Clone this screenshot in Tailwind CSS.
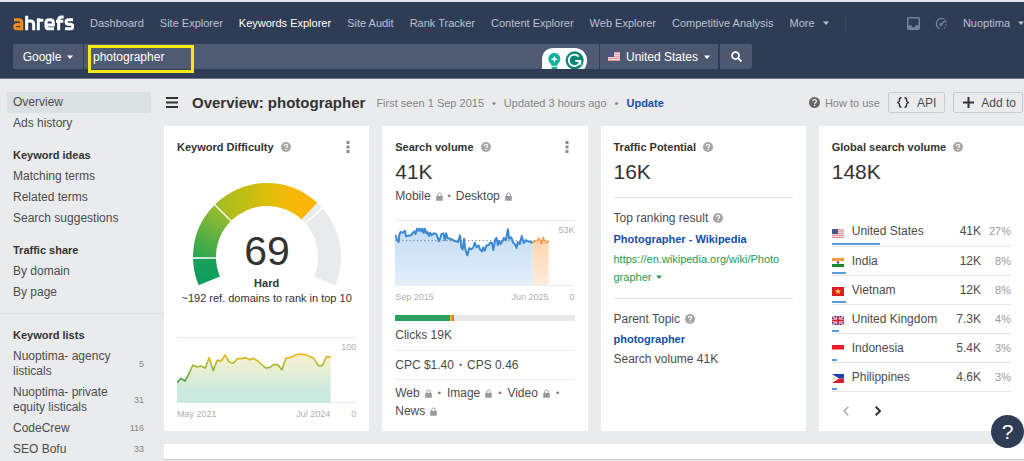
<!DOCTYPE html>
<html lang="en">
<head>
<meta charset="utf-8">
<meta name="viewport" content="width=device-width, initial-scale=1">
<title>Keywords Explorer: photographer</title>
<script src="https://cdn.jsdelivr.net/npm/@tailwindcss/browser@4"></script>
</head>
<body class="relative min-h-screen overflow-x-hidden bg-[#e9ebed] font-['Liberation_Sans',Arial,sans-serif] text-[12px] leading-4 text-[#4c4c4c]">
<svg class="hidden" aria-hidden="true">
  <symbol id="help" viewBox="0 0 20 20"><circle cx="10" cy="10" r="10" fill="currentColor"/><path d="M6.8 7.8c0-4.6 6.6-4 6.6-.3 0 2.500-3.200 2.300-3.200 4.900" fill="none" stroke="#fff" stroke-width="2.200"/><circle cx="10.200" cy="15.200" r="1.400" fill="#fff"/></symbol>
  <symbol id="lock" viewBox="0 0 14 18"><path d="M3.500 9V5.500a3.500 3.500 0 0 1 7 0V9" fill="none" stroke="currentColor" stroke-width="2"/><rect x="0.500" y="8" width="13" height="9.500" rx="1" fill="currentColor"/></symbol>
  <symbol id="caret" viewBox="0 0 12 8"><path d="M0 1h12L6 8z" fill="currentColor"/></symbol>
  <symbol id="dots" viewBox="0 0 4 12"><path d="M.5 0h3v3h-3zM.5 4.500h3v3h-3zM.5 9h3v3h-3z" fill="currentColor"/></symbol>
  <symbol id="us" viewBox="0 0 24 18"><path fill="#f3dfe1" d="M0 0h24v18H0z"/><path d="M0 1.500h24M0 5.500h24M0 9.500h24M0 13.200h24M0 17h24" stroke="#dc8f97" stroke-width="1.900"/><path fill="#4a5788" d="M0 0h12v10H0z"/></symbol>
</svg>

<header class="border-t-2 border-b border-t-[#dfe5ec] border-b-[#6d7686] bg-[#2f3c56] pb-[9px]">
  <nav class="flex h-[42px] items-center pl-[13px] text-[11px] whitespace-nowrap text-[#b9c1cf]" aria-label="Main">
    <a href="#" class="mr-4 block" aria-label="ahrefs">
      <svg class="h-4 w-[61px]" viewBox="0 0 183 48" fill="none" stroke-width="9">
        <g stroke="#f58b1b"><path d="M3 14.500h14c6 0 9 2 9 8V46M26 41.500H12c-9 0-9-13 0-13h14"/></g>
        <g stroke="#fff"><path d="M41 2v44M41 18h11c7 0 10 3 10 9v19M76 46V10M76 16h15M123 41.500h-14c-7 0-10-3-10-8V23c0-6 3-9 9-9h4c6 0 9 3 9 9v7H99M137 46V15c0-6 3-9 9-9h6M129 18.500h22M180 14.500h-14c-9 0-9 13 0 13h6c10 0 10 14 0 14h-16"/></g>
      </svg>
    </a>
    <div class="flex items-center gap-4">
      <a href="#">Dashboard</a>
      <a href="#">Site Explorer</a>
      <a href="#" class="text-white">Keywords Explorer</a>
      <a href="#">Site Audit</a>
      <a href="#">Rank Tracker</a>
      <a href="#">Content Explorer</a>
      <a href="#">Web Explorer</a>
      <a href="#">Competitive Analysis</a>
      <button class="flex items-center gap-2">More <svg class="h-1 w-1.5"><use href="#caret"/></svg></button>
      <span class="h-4 w-px bg-[#3b4761]"></span>
    </div>
    <div class="ml-auto flex items-center gap-[15px]">
      <button aria-label="Inbox" class="text-[#76819a]"><svg class="size-[13px]" viewBox="0 0 26 26" fill="none" stroke="currentColor" stroke-width="3"><rect x="1.500" y="1.500" width="23" height="23" rx="2"/><path d="M2 18h6l2 4h6l2-4h6"/><path d="M2 18h6l2 4h6l2-4h6v6H2z" fill="currentColor" stroke="none"/></svg></button>
      <button aria-label="Usage" class="text-[#76819a]"><svg class="size-[13px]" viewBox="0 0 26 26" fill="none" stroke="currentColor" stroke-width="2.500"><path d="M19 4A11 11 0 1 0 10 24"/><path d="M12 15l10-9"/><circle cx="12" cy="14.500" r="2"/><path d="M22 9a11 11 0 0 1-8 15" stroke-dasharray="2.500 3.500"/></svg></button>
      <button class="flex items-center gap-2">Nuoptima <svg class="h-1 w-1.5"><use href="#caret"/></svg></button>
    </div>
  </nav>
  <form class="flex h-[25px] pl-[13px] text-[12px] text-white">
    <button type="button" class="flex w-[70px] items-center justify-center gap-1.5 rounded-l-xs bg-[#4c5870]">Google <svg class="h-1 w-1.5"><use href="#caret"/></svg></button>
    <div class="relative ml-px flex flex-none basis-[515px] bg-[#4f5b73]">
      <input type="text" value="photographer" aria-label="Keyword" class="w-full bg-transparent pl-[9px] text-white outline-none">
      <span class="absolute top-px left-[4px] h-7 w-[106px] border-3 border-[#f5e916]"></span>
      <svg class="absolute right-3 bottom-0 h-[21px] w-[45px]" viewBox="0 0 135 63">
        <path d="M0 63V36C0 12 14 0 36 0h60c26 0 39 18 39 37 0 10-3 19-8 26z" fill="#fff"/>
        <path d="M19 33a18 18 0 1 1 29 14l-3 6H29l-3-6c-4-3-7-8-7-14zM29 56h16v7H29z" fill="#12b39a"/><path d="M37 23l3 8 8 3-8 3-3 8-3-8-8-3 8-3z" fill="#fff"/>
        <circle cx="98" cy="37" r="27" fill="#0b8573"/><path d="M110 26a17 17 0 1 0 4 13h-14M106 39h9v11" fill="none" stroke="#fff" stroke-width="5.500"/>
      </svg>
    </div>
    <button type="button" class="ml-px flex w-[118px] items-center justify-center gap-1.5 bg-[#4c5870] whitespace-nowrap"><svg class="h-[9px] w-3"><use href="#us"/></svg>United States <svg class="h-1 w-1.5"><use href="#caret"/></svg></button>
    <button type="submit" aria-label="Search" class="ml-0.5 flex w-8 items-center justify-center rounded-r-xs bg-[#4c5870]"><svg class="size-[11px]" viewBox="0 0 22 22" fill="none" stroke="currentColor" stroke-width="3.500"><circle cx="9" cy="9" r="7"/><path d="M14 14l7 7"/></svg></button>
  </form>
</header>

<div class="flex">
  <aside class="w-[164px] flex-none pt-[13px]">
    <nav class="flex flex-col pr-[13px] pl-[7px] leading-[21px]" aria-label="Keyword">
      <a href="#" class="rounded-xs bg-[#dbe0e3] px-1.5">Overview</a>
      <a href="#" class="px-1.5">Ads history</a>
      <h2 class="mt-[11px] px-1.5 text-[11px] font-bold text-[#333]">Keyword ideas</h2>
      <a href="#" class="px-1.5">Matching terms</a>
      <a href="#" class="px-1.5">Related terms</a>
      <a href="#" class="px-1.5">Search suggestions</a>
      <h2 class="mt-[11px] px-1.5 text-[11px] font-bold text-[#333]">Traffic share</h2>
      <a href="#" class="px-1.5">By domain</a>
      <a href="#" class="px-1.5">By page</a>
    </nav>
    <section class="mt-2.5 flex flex-col gap-1.5 border-t border-[#dcdfe2] pt-[13px] pr-5 pl-[13px] leading-[15px]">
      <h2 class="text-[11px] leading-4 font-bold text-[#333]">Keyword lists</h2>
      <a href="#" class="flex items-center justify-between"><span>Nuoptima- agency<br>listicals</span><span class="text-[9px] text-[#858585]">5</span></a>
      <a href="#" class="flex items-center justify-between"><span>Nuoptima- private<br>equity listicals</span><span class="text-[9px] text-[#858585]">31</span></a>
      <a href="#" class="flex items-center justify-between"><span>CodeCrew</span><span class="text-[9px] text-[#858585]">116</span></a>
      <a href="#" class="flex items-center justify-between"><span>SEO Bofu</span><span class="text-[9px] text-[#858585]">33</span></a>
    </section>
  </aside>

  <main class="min-w-0 flex-1 pt-[13px]">
    <div class="flex items-center whitespace-nowrap">
      <button aria-label="Toggle menu" class="ml-0.5 text-[#333]"><svg class="h-[11px] w-3" viewBox="0 0 12 11" stroke="currentColor" stroke-width="2"><path d="M0 1h12M0 5.500h12M0 10h12"/></svg></button>
      <h1 class="ml-3.5 text-[15px] font-bold text-[#333]">Overview: photographer</h1>
      <p class="ml-[11px] flex gap-2 text-[11px] text-[#858585]"><span>First seen 1 Sep 2015</span><span>•</span><span>Updated 3 hours ago</span><span>•</span><a href="#" class="font-bold text-[#1250a8]">Update</a></p>
      <a href="#" class="ml-auto flex items-center gap-[5px] text-[11px] text-[#858585]"><svg class="size-[11px] text-[#666]"><use href="#help"/></svg>How to use</a>
      <button class="ml-2 flex h-[21px] items-center gap-2 rounded-xs border border-[#c9cccf] px-2"><svg class="h-[11px] w-3 text-[#333]" viewBox="0 0 24 22" fill="none" stroke="currentColor" stroke-width="3"><path d="M9 1.500H8C5 1.500 5 3 5 6s0 4-3.500 5C5 12 5 13 5 16s0 4.500 3 4.500h1M15 1.500h1c3 0 3 1.500 3 4.500s0 4 3.500 5c-3.500 1-3.500 2-3.500 5s0 4.500-3 4.500h-1"/></svg>API</button>
      <button class="mr-px ml-2 flex h-[21px] items-center gap-[7px] rounded-xs border border-[#c9cccf] pr-1.5 pl-[9px]"><svg class="size-[11px] text-[#333]" viewBox="0 0 11 11" stroke="currentColor" stroke-width="2"><path d="M5.500 0v11M0 5.500h11"/></svg>Add to</button>
    </div>

    <div class="mt-[13px] grid grid-cols-4 gap-[13px]">
      <section class="flex flex-col bg-white px-[13px] pt-[13px] pb-[11px]">
        <h2 class="flex items-center text-[11px] font-bold text-[#333]">Keyword Difficulty <svg class="ml-[7px] size-[10px] text-[#a5a5a5]"><use href="#help"/></svg><button aria-label="Options" class="mr-1.5 ml-auto text-[#8a8a8a]"><svg class="h-3 w-1"><use href="#dots"/></svg></button></h2>
        <svg class="mx-auto mt-[27px] h-[104px] w-[150px]" viewBox="-75 -75 150 104" role="img" aria-label="Keyword difficulty 69">
          <defs>
            <linearGradient id="g1" x1="0" y1="1" x2="0" y2="0"><stop stop-color="#0b9d5d"/><stop offset="1" stop-color="#1ba05a"/></linearGradient>
            <linearGradient id="g2" x1="0" y1="1" x2=".4" y2="0"><stop stop-color="#27a552"/><stop offset="1" stop-color="#96bb30"/></linearGradient>
            <linearGradient id="g3"><stop stop-color="#9fbc22"/><stop offset=".5" stop-color="#dabf0a"/><stop offset=".75" stop-color="#f7b806"/><stop offset="1" stop-color="#fcb205"/></linearGradient>
          </defs>
          <path d="M-68.400 28.300A74 74 0 0 1-74 0H-51A51 51 0 0 0-47.100 19.500z" fill="url(#g1)"/>
          <path d="M-74 0A74 74 0 0 1-52.300-52.300L-36-36A51 51 0 0 0-51 0z" fill="url(#g2)"/>
          <path d="M-52.300-52.300A74 74 0 0 1 50.300-54.300L34.700-37.400A51 51 0 0 0-36-36z" fill="url(#g3)"/>
          <path d="M50.300-54.300A74 74 0 0 1 68.400 28.300L47.100 19.500A51 51 0 0 0 34.700-37.400z" fill="#e9eaec"/>
          <path d="M-75 1H-50M-53.500-53.500L-35-35M56-49.500L37.500-33" stroke="#fff" stroke-width="1.300"/>
          <text y="8" text-anchor="middle" font-size="41" fill="#333">69</text>
        </svg>
        <p class="mt-[-10px] text-center text-[11px] leading-[15px] font-bold text-[#333]">Hard</p>
        <p class="text-center text-[11px] leading-[15px] whitespace-nowrap text-[#333]">~192 ref. domains to rank in top 10</p>
        <figure class="relative mt-auto text-[9px] leading-3 text-[#b0b0b0]">
          <svg class="block h-[66px] w-full" viewBox="0 0 540 198" preserveAspectRatio="none">
            <defs>
              <linearGradient id="kf" x1="0" y1="0" x2="0" y2="1"><stop stop-color="#f8f0d2"/><stop offset=".35" stop-color="#e5efd5"/><stop offset=".75" stop-color="#cbe9df"/><stop offset="1" stop-color="#c9eadf"/></linearGradient>
              <linearGradient id="ks" gradientUnits="userSpaceOnUse" x1="0" y1="255" x2="0" y2="340"><stop stop-color="#f0bb18"/><stop offset=".2" stop-color="#cfbb22"/><stop offset=".5" stop-color="#93b72f"/><stop offset="1" stop-color="#3ea850"/></linearGradient>
            </defs>
            <path d="M0 1.500H540M0 197H540" stroke="#e6e6e6" stroke-width="3"/>
            <g transform="translate(-53 -203)" stroke-linejoin="round">
              <path fill="url(#kf)" d="M53 340 65 327 77 335 88 315 101 287 113 293 125 290 138 296 150 265 162 303 174 273 187 274 198 257 210 278 222 282 235 268 247 268 260 265 272 271 285 267 300 278 320 296 333 294 345 285 357 286 369 301 381 266 393 265 405 259 420 254 435 255 450 260 465 267 479 289 491 289 503 262 516 263V401H53z"/>
              <path fill="none" stroke="url(#ks)" stroke-width="5" d="M53 340 65 327 77 335 88 315 101 287 113 293 125 290 138 296 150 265 162 303 174 273 187 274 198 257 210 278 222 282 235 268 247 268 260 265 272 271 285 267 300 278 320 296 333 294 345 285 357 286 369 301 381 266 393 265 405 259 420 254 435 255 450 260 465 267 479 289 491 289 503 262 516 263"/>
            </g>
          </svg>
          <span class="absolute top-1 right-0">100</span>
          <figcaption class="mt-[5px] flex"><span>May 2021</span><span class="mr-[26px] ml-auto">Jul 2024</span><span class="absolute right-0">0</span></figcaption>
        </figure>
      </section>

      <section class="flex flex-col bg-white px-[13px] pt-[13px] pb-3">
        <h2 class="flex items-center text-[11px] font-bold text-[#333]">Search volume <svg class="ml-[7px] size-[10px] text-[#a5a5a5]"><use href="#help"/></svg><button aria-label="Options" class="mr-1.5 ml-auto text-[#8a8a8a]"><svg class="h-3 w-1"><use href="#dots"/></svg></button></h2>
        <p class="mt-[5px] text-[21px] leading-6 text-[#333]">41K</p>
        <p class="mt-1 flex items-center gap-[5px]">Mobile <svg class="h-[9px] w-[7px] text-[#999]"><use href="#lock"/></svg><span class="text-[9px] text-[#777]">•</span>Desktop <svg class="h-[9px] w-[7px] text-[#999]"><use href="#lock"/></svg></p>
        <figure class="relative mt-4 text-[9px] leading-3 text-[#b0b0b0]">
          <svg class="block h-[66px] w-full" viewBox="0 0 540 198" preserveAspectRatio="none">
            <defs>
              <linearGradient id="vf" x1="0" y1="0" x2="0" y2="1"><stop stop-color="#c3dcf4"/><stop offset="1" stop-color="#e5effa"/></linearGradient>
              <linearGradient id="of" x1="0" y1="0" x2="0" y2="1"><stop stop-color="#fdd3ab"/><stop offset="1" stop-color="#fdeddd"/></linearGradient>
            </defs>
            <path d="M0 1.500H540M0 197H540" stroke="#e6e6e6" stroke-width="3"/>
            <g transform="translate(-18 -16)" stroke-linejoin="round">
              <path fill="url(#vf)" d="M18 60 24 75 29 82 31 60 35 52 42 54 48 48 51 65 58 63 66 62 70 56 76 50 80 58 84 42 88 48 92 42 96 50 100 42 104 55 108 42 112 56 116 52 120 64 124 54 128 62 134 56 142 58 146 66 150 80 154 72 158 58 164 56 168 76 172 56 176 70 184 72 192 76 200 80 208 82 214 62 218 98 222 104 226 72 230 104 236 122 242 100 248 104 254 98 258 84 264 98 270 92 274 104 280 110 284 98 288 108 294 92 300 92 304 84 310 84 314 106 320 74 324 70 328 92 332 78 336 88 342 80 346 70 352 76 358 44 362 72 368 68 374 84 380 90 384 100 388 82 394 88 400 64 406 86 412 76 418 80 426 82 433 84V212H18z"/>
              <path fill="url(#of)" d="M433 84 438 78 444 82 450 72 456 72 459 90 464 68 470 84 476 82 481 78V212H433z"/>
              <path d="M18 78H481" stroke="#7b8085" stroke-width="3" stroke-dasharray="4 7"/>
              <path fill="none" stroke="#3b89d2" stroke-width="6" d="M18 60 24 75 29 82 31 60 35 52 42 54 48 48 51 65 58 63 66 62 70 56 76 50 80 58 84 42 88 48 92 42 96 50 100 42 104 55 108 42 112 56 116 52 120 64 124 54 128 62 134 56 142 58 146 66 150 80 154 72 158 58 164 56 168 76 172 56 176 70 184 72 192 76 200 80 208 82 214 62 218 98 222 104 226 72 230 104 236 122 242 100 248 104 254 98 258 84 264 98 270 92 274 104 280 110 284 98 288 108 294 92 300 92 304 84 310 84 314 106 320 74 324 70 328 92 332 78 336 88 342 80 346 70 352 76 358 44 362 72 368 68 374 84 380 90 384 100 388 82 394 88 400 64 406 86 412 76 418 80 426 82 433 84"/>
              <path fill="none" stroke="#f39a3f" stroke-width="5" stroke-dasharray="14 4" d="M433 84 438 78 444 82 450 72 456 72 459 90 464 68 470 84 476 82 481 78"/>
            </g>
          </svg>
          <span class="absolute top-1 right-0">53K</span>
          <figcaption class="mt-[5px] flex"><span>Sep 2015</span><span class="mr-[26px] ml-auto">Jun 2025</span><span class="absolute right-0">0</span></figcaption>
        </figure>
        <div class="mt-3 flex h-1.5 bg-[#e9e9e9]"><span class="w-[55px] bg-[#27a35f]"></span><span class="w-0.5 bg-[#e8b92c]"></span><span class="w-0.5 bg-[#e1772f]"></span></div>
        <p class="mt-1.5 border-b border-[#ececec] pb-[7px]">Clicks 19K</p>
        <p class="flex gap-[5px] border-b border-[#ececec] py-1.5">CPC $1.40 <span class="text-[9px] text-[#777]">•</span> CPS 0.46</p>
        <div class="mt-[5px] flex flex-wrap items-center gap-x-1.5 gap-y-[2px]">
          <span class="flex items-center gap-[5px]">Web <svg class="h-[9px] w-[7px] text-[#999]"><use href="#lock"/></svg></span><span class="text-[9px] text-[#777]">•</span>
          <span class="flex items-center gap-[5px]">Image <svg class="h-[9px] w-[7px] text-[#999]"><use href="#lock"/></svg></span><span class="text-[9px] text-[#777]">•</span>
          <span class="flex items-center gap-[5px]">Video <svg class="h-[9px] w-[7px] text-[#999]"><use href="#lock"/></svg></span><span class="text-[9px] text-[#777]">•</span>
          <span class="flex items-center gap-[5px]">News <svg class="h-[9px] w-[7px] text-[#999]"><use href="#lock"/></svg></span>
        </div>
      </section>

      <section class="flex flex-col bg-white px-[13px] pt-[13px] pb-3">
        <h2 class="flex items-center text-[11px] font-bold text-[#333]">Traffic Potential <svg class="ml-[7px] size-[10px] text-[#a5a5a5]"><use href="#help"/></svg></h2>
        <p class="mt-[5px] text-[21px] leading-6 text-[#333]">16K</p>
        <div class="mt-[13px] border-t border-[#e6e6e6] pt-3">
          <p class="flex items-center gap-[5px]">Top ranking result <svg class="size-[10px] text-[#a5a5a5]"><use href="#help"/></svg></p>
          <a href="#" class="mt-[5px] block text-[11px] font-bold text-[#1250a8]">Photographer - Wikipedia</a>
          <a href="#" class="mt-[3px] block text-[11px] leading-[18px] text-[#1d9d50]">https://en.wikipedia.org/wiki/Photo<br><span class="flex items-center gap-[5px]">grapher <svg class="h-1 w-1.5"><use href="#caret"/></svg></span></a>
        </div>
        <div class="mt-3 border-t border-[#e6e6e6] pt-3">
          <p class="flex items-center gap-[5px]">Parent Topic <svg class="size-[10px] text-[#a5a5a5]"><use href="#help"/></svg></p>
          <a href="#" class="mt-1 block text-[11px] font-bold text-[#1250a8]">photographer</a>
          <p class="mt-1">Search volume 41K</p>
        </div>
      </section>

      <section class="flex flex-col bg-white px-[13px] pt-[13px] pb-3">
        <h2 class="flex items-center text-[11px] font-bold whitespace-nowrap text-[#333]">Global search volume <svg class="ml-[7px] size-[10px] text-[#a5a5a5]"><use href="#help"/></svg></h2>
        <p class="mt-[5px] text-[21px] leading-6 text-[#333]">148K</p>
        <table class="mt-[33px] w-full whitespace-nowrap">
          <tbody>
            <tr class="relative h-[29px] border-b border-[#e6e6e6]"><td class="w-5 pt-1"><svg class="h-[9px] w-3"><use href="#us"/></svg><span class="absolute bottom-0 left-0 h-0.5 bg-[#5a9bdc]" style="width:27%"></span></td><td>United States</td><td class="text-right">41K</td><td class="w-[30px] text-right text-[11px] text-[#9a9a9a]">27%</td></tr>
            <tr class="relative h-[29px] border-b border-[#e6e6e6]"><td class="pt-1"><svg class="h-[9px] w-3" viewBox="0 0 24 18"><path fill="#f59a3a" d="M0 0h24v6H0z"/><path fill="#fff" d="M0 6h24v6H0z"/><path fill="#158a2b" d="M0 12h24v6H0z"/><circle cx="12" cy="9" r="2.500" fill="#394f8f"/></svg><span class="absolute bottom-0 left-0 h-0.5 bg-[#5a9bdc]" style="width:8%"></span></td><td>India</td><td class="text-right">12K</td><td class="text-right text-[11px] text-[#9a9a9a]">8%</td></tr>
            <tr class="relative h-[29px] border-b border-[#e6e6e6]"><td class="pt-1"><svg class="h-[9px] w-3" viewBox="0 0 24 18"><path fill="#dc1c22" d="M0 0h24v18H0z"/><path fill="#ffe12b" d="M12 3l1.600 4.200H18l-3.500 2.700 1.300 4.300L12 11.600l-3.800 2.600 1.300-4.300L6 7.200h4.400z"/></svg><span class="absolute bottom-0 left-0 h-0.5 bg-[#5a9bdc]" style="width:8%"></span></td><td>Vietnam</td><td class="text-right">12K</td><td class="text-right text-[11px] text-[#9a9a9a]">8%</td></tr>
            <tr class="relative h-[29px] border-b border-[#e6e6e6]"><td class="pt-1"><svg class="h-[9px] w-3" viewBox="0 0 24 18"><path fill="#2b3f83" d="M0 0h24v18H0z"/><path d="M0 0l24 18M24 0L0 18" stroke="#fff" stroke-width="3.500"/><path d="M0 0l24 18M24 0L0 18" stroke="#d3263a" stroke-width="1.200"/><path d="M12 0v18M0 9h24" stroke="#fff" stroke-width="6"/><path d="M12 0v18M0 9h24" stroke="#d3263a" stroke-width="3.600"/></svg><span class="absolute bottom-0 left-0 h-0.5 bg-[#5a9bdc]" style="width:4%"></span></td><td>United Kingdom</td><td class="text-right">7.3K</td><td class="text-right text-[11px] text-[#9a9a9a]">4%</td></tr>
            <tr class="relative h-[29px] border-b border-[#e6e6e6]"><td class="pt-1"><svg class="h-[9px] w-3" viewBox="0 0 24 18"><path fill="#fff" d="M0 0h24v18H0z"/><path fill="#ee1a25" d="M0 0h24v9H0z"/></svg><span class="absolute bottom-0 left-0 h-0.5 bg-[#5a9bdc]" style="width:3%"></span></td><td>Indonesia</td><td class="text-right">5.4K</td><td class="text-right text-[11px] text-[#9a9a9a]">3%</td></tr>
            <tr class="relative h-[29px] border-b border-[#e6e6e6]"><td class="pt-1"><svg class="h-[9px] w-3" viewBox="0 0 24 18"><path fill="#1b3fae" d="M0 0h24v9H0z"/><path fill="#d81e2c" d="M0 9h24v9H0z"/><path fill="#fff" d="M0 0l14 9L0 18z"/><circle cx="4.500" cy="9" r="2.200" fill="#f6c52a"/></svg><span class="absolute bottom-0 left-0 h-0.5 bg-[#5a9bdc]" style="width:3%"></span></td><td>Philippines</td><td class="text-right">4.6K</td><td class="text-right text-[11px] text-[#9a9a9a]">3%</td></tr>
          </tbody>
        </table>
        <div class="mt-[13px] flex gap-5 pl-2">
          <button aria-label="Previous" class="flex size-3 items-center justify-center text-[#aaa]"><svg class="h-[10px] w-1.5" viewBox="0 0 6 10" fill="none" stroke="currentColor" stroke-width="1.500"><path d="M5.300.7L1 5l4.300 4.300"/></svg></button>
          <button aria-label="Next" class="flex size-3 items-center justify-center text-[#333]"><svg class="h-[10px] w-1.5" viewBox="0 0 6 10" fill="none" stroke="currentColor" stroke-width="2"><path d="M.7.700L5 5 .7 9.300"/></svg></button>
        </div>
      </section>
    </div>
    <section class="mt-[13px] h-4 border-b border-[#d0d0d0] bg-white"></section>
  </main>
</div>
<button aria-label="Help" class="fixed right-0 bottom-[13px] flex size-[33px] items-center justify-center rounded-full bg-[#2f3c56] text-[21px] text-white">?</button>
</body>
</html>
